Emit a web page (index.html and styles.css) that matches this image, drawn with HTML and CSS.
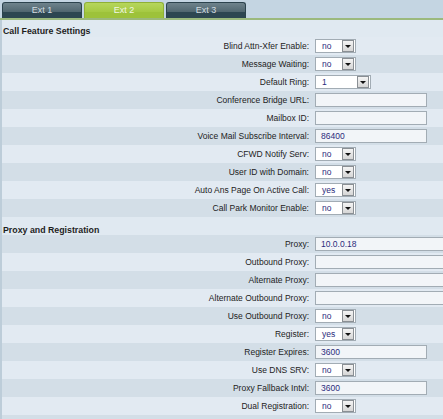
FILE: index.html
```
<!DOCTYPE html>
<html lang="en">
<head>
    <meta charset="UTF-8">
    <title>Ext 2</title>
    <link rel="stylesheet" href="styles.css">
</head>
<body>
    <div class="tabs">
        <div class="tab">Ext 1</div>
        <div class="tab active">Ext 2</div>
        <div class="tab">Ext 3</div>
    </div>

    <div class="content">
        <div class="section first">
            <div class="section-title">Call Feature Settings</div>
            <div class="row"><label>Blind Attn-Xfer Enable:</label><div class="field"><span class="select">no<i class="btn"></i></span></div></div>
            <div class="row"><label>Message Waiting:</label><div class="field"><span class="select">no<i class="btn"></i></span></div></div>
            <div class="row"><label>Default Ring:</label><div class="field"><span class="select wide">1<i class="btn"></i></span></div></div>
            <div class="row"><label>Conference Bridge URL:</label><div class="field"><span class="input"></span></div></div>
            <div class="row"><label>Mailbox ID:</label><div class="field"><span class="input"></span></div></div>
            <div class="row"><label>Voice Mail Subscribe Interval:</label><div class="field"><span class="input">86400</span></div></div>
            <div class="row"><label>CFWD Notify Serv:</label><div class="field"><span class="select">no<i class="btn"></i></span></div></div>
            <div class="row"><label>User ID with Domain:</label><div class="field"><span class="select">no<i class="btn"></i></span></div></div>
            <div class="row"><label>Auto Ans Page On Active Call:</label><div class="field"><span class="select">yes<i class="btn"></i></span></div></div>
            <div class="row"><label>Call Park Monitor Enable:</label><div class="field"><span class="select">no<i class="btn"></i></span></div></div>
        </div>

        <div class="section second">
            <div class="section-title">Proxy and Registration</div>
            <div class="row"><label>Proxy:</label><div class="field"><span class="input long">10.0.0.18</span></div></div>
            <div class="row"><label>Outbound Proxy:</label><div class="field"><span class="input long"></span></div></div>
            <div class="row"><label>Alternate Proxy:</label><div class="field"><span class="input long"></span></div></div>
            <div class="row"><label>Alternate Outbound Proxy:</label><div class="field"><span class="input long"></span></div></div>
            <div class="row"><label>Use Outbound Proxy:</label><div class="field"><span class="select">no<i class="btn"></i></span></div></div>
            <div class="row"><label>Register:</label><div class="field"><span class="select">yes<i class="btn"></i></span></div></div>
            <div class="row"><label>Register Expires:</label><div class="field"><span class="input">3600</span></div></div>
            <div class="row"><label>Use DNS SRV:</label><div class="field"><span class="select">no<i class="btn"></i></span></div></div>
            <div class="row"><label>Proxy Fallback Intvl:</label><div class="field"><span class="input">3600</span></div></div>
            <div class="row"><label>Dual Registration:</label><div class="field"><span class="select">no<i class="btn"></i></span></div></div>
            <div class="row"></div>
        </div>
    </div>
</body>
</html>
```

FILE: styles.css
```
body {
    margin: 0;
    width: 443px;
    height: 419px;
    overflow: hidden;
    font-family: 'Liberation Sans', Arial, sans-serif;
    font-size: 8.5px;
    color: #222;
    background: #dde6ee;
}

.tabs {
    display: flex;
    gap: 2px;
    height: 16px;
    padding: 2px 0 0 2px;
    background: #c4d5e2;
    border-bottom: 2px solid #9bb97d;
}

.tab {
    width: 78px;
    height: 15px;
    line-height: 15px;
    text-align: center;
    color: #d3dde1;
    font-size: 9px;
    border: 1px solid #2c434d;
    border-bottom: none;
    border-radius: 3px 3px 0 0;
    background: linear-gradient(#6f838c, #50666f 60%, #2d4651 62%, #2d4651);
}

.tab.active {
    color: #f1f7e4;
    border-color: #8fb034;
    background: linear-gradient(#b6d65c, #a5c942 60%, #9dc23a 62%, #9dc23a);
}

.content {
    border-left: 2px solid #bdcdd9;
    background: #e0e9f1;
}

.section-title {
    height: 17px;
    line-height: 22px;
    padding-left: 1px;
    font-size: 8.8px;
    font-weight: bold;
    color: #1e1e1e;
}

.section.second {
    padding-top: 1px;
}

.section.second .section-title {
    line-height: 25px;
}

.row {
    display: grid;
    grid-template-columns: 313px 1fr;
    align-items: center;
    height: 18px;
    background: #e2eaf2;
}

.section.first .row:nth-child(odd),
.section.second .row:nth-child(even) {
    background: #d3dee7;
}

.row label {
    text-align: right;
    padding-right: 6px;
}

.field {
    display: flex;
    align-items: center;
}

.select,
.input {
    position: relative;
    box-sizing: border-box;
    height: 14px;
    line-height: 12px;
    padding-left: 6px;
    color: #2b2c7c;
    border: 1px solid #a2acb4;
}

.select {
    width: 41px;
    background: #fff;
}

.select.wide {
    width: 56px;
}

.select .btn {
    position: absolute;
    right: 1px;
    top: 0;
    width: 10px;
    height: 10px;
    border: 1px solid #8a8f94;
    background: linear-gradient(#f4f4f4, #d6d6d6);
}

.select .btn::after {
    content: '';
    position: absolute;
    left: 2px;
    top: 4px;
    border-left: 3px solid transparent;
    border-right: 3px solid transparent;
    border-top: 3px solid #111;
}

.input {
    width: 112px;
    padding-left: 5px;
    background: #f2f5f8;
}

.input.long {
    width: 150px;
}
```
